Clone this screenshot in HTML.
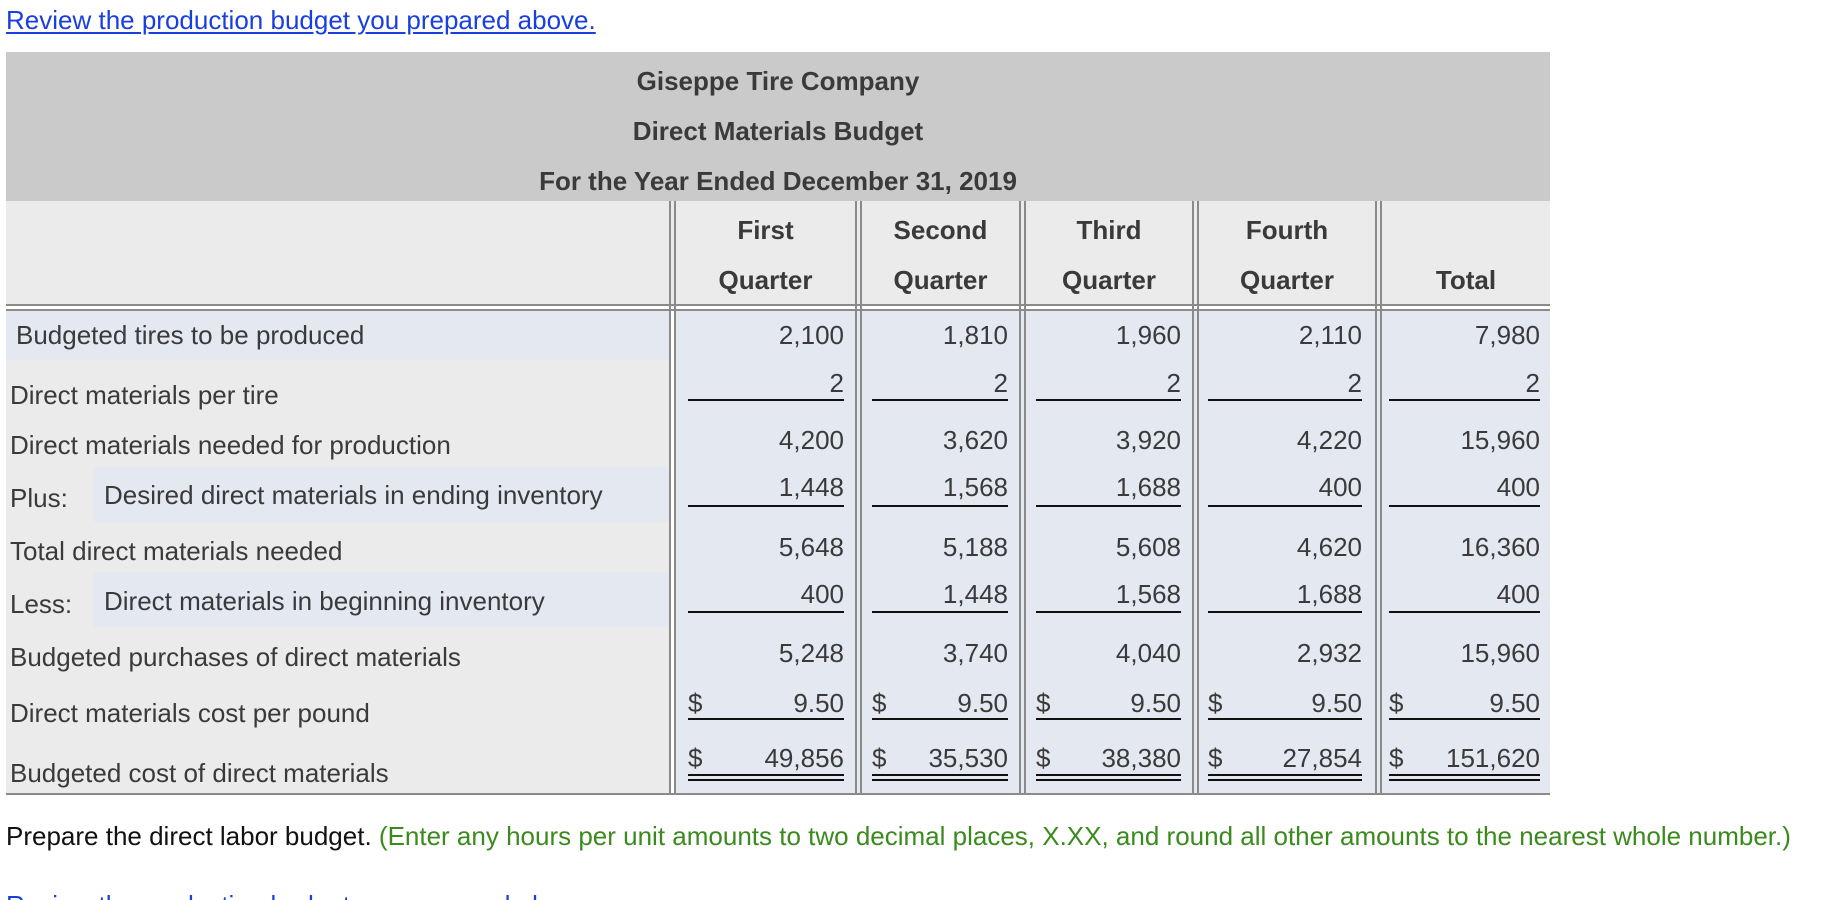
<!DOCTYPE html>
<html><head><meta charset="utf-8">
<style>
html,body{margin:0;padding:0;background:#fff;width:1848px;height:900px;overflow:hidden;position:relative;font-family:"Liberation Sans",Arial,sans-serif;color:#3a3a3a;}
.a{position:absolute;}
.t{position:absolute;font-size:26px;line-height:30px;white-space:nowrap;}
.b{font-weight:bold;}
.r{text-align:right;}
.lnk{color:#1a3fe0;text-decoration:underline;text-underline-offset:3px;}
.vl{position:absolute;top:201px;height:594px;width:2px;background:#8a8a8a;}
.hl{position:absolute;left:6px;width:1544px;height:2px;background:#8a8a8a;}
.ul{position:absolute;height:2px;background:#111;}
.c1{left:688px;width:156px}
.c2{left:872px;width:136px}
.c3{left:1036px;width:145px}
.c4{left:1208px;width:154px}
.c5{left:1389px;width:151px}
.d{position:absolute;font-size:26px;line-height:30px;}
</style></head><body>

<div class="t lnk" style="left:6px;top:5px;">Review the production budget you prepared above.</div>

<div class="a" style="left:6px;top:52px;width:1544px;height:149px;background:#cacaca;"></div>
<div class="t b" style="left:6px;width:1544px;text-align:center;top:66px;">Giseppe Tire Company</div>
<div class="t b" style="left:6px;width:1544px;text-align:center;top:116px;">Direct Materials Budget</div>
<div class="t b" style="left:6px;width:1544px;text-align:center;top:166px;">For the Year Ended December 31, 2019</div>

<div class="a" style="left:6px;top:201px;width:1544px;height:103px;background:#ebebeb;"></div>
<div class="a" style="left:6px;top:311px;width:663px;height:484px;background:#ebebeb;"></div>
<div class="a" style="left:675px;top:311px;width:875px;height:484px;background:#e4e8f1;"></div>
<div class="a" style="left:6px;top:311px;width:663px;height:49px;background:#e3e8f1;"></div>
<div class="a" style="left:94px;top:467px;width:575px;height:55px;background:#e3e8f1;"></div>
<div class="a" style="left:94px;top:572px;width:575px;height:55px;background:#e3e8f1;"></div>

<div class="hl" style="top:304px;"></div>
<div class="hl" style="top:309px;"></div>
<div class="hl" style="top:793px;"></div>

<div class="vl" style="left:669px"></div><div class="vl" style="left:674px"></div>
<div class="vl" style="left:855px"></div><div class="vl" style="left:860px"></div>
<div class="vl" style="left:1019px"></div><div class="vl" style="left:1024px"></div>
<div class="vl" style="left:1192px"></div><div class="vl" style="left:1197px"></div>
<div class="vl" style="left:1375px"></div><div class="vl" style="left:1380px"></div>

<div class="t b" style="left:676px;width:179px;text-align:center;top:215px;">First</div>
<div class="t b" style="left:676px;width:179px;text-align:center;top:265px;">Quarter</div>
<div class="t b" style="left:862px;width:157px;text-align:center;top:215px;">Second</div>
<div class="t b" style="left:862px;width:157px;text-align:center;top:265px;">Quarter</div>
<div class="t b" style="left:1026px;width:166px;text-align:center;top:215px;">Third</div>
<div class="t b" style="left:1026px;width:166px;text-align:center;top:265px;">Quarter</div>
<div class="t b" style="left:1199px;width:176px;text-align:center;top:215px;">Fourth</div>
<div class="t b" style="left:1199px;width:176px;text-align:center;top:265px;">Quarter</div>
<div class="t b" style="left:1382px;width:168px;text-align:center;top:265px;">Total</div>

<div class="t" style="left:16px;top:320px;">Budgeted tires to be produced</div>
<div class="t" style="left:10px;top:380px;">Direct materials per tire</div>
<div class="t" style="left:10px;top:430px;">Direct materials needed for production</div>
<div class="t" style="left:10px;top:483px;">Plus:</div>
<div class="t" style="left:104px;top:480px;">Desired direct materials in ending inventory</div>
<div class="t" style="left:10px;top:536px;">Total direct materials needed</div>
<div class="t" style="left:10px;top:589px;">Less:</div>
<div class="t" style="left:104px;top:586px;">Direct materials in beginning inventory</div>
<div class="t" style="left:10px;top:642px;">Budgeted purchases of direct materials</div>
<div class="t" style="left:10px;top:698px;">Direct materials cost per pound</div>
<div class="t" style="left:10px;top:758px;">Budgeted cost of direct materials</div>

<div class="d r c1" style="top:320px">2,100</div><div class="d r c2" style="top:320px">1,810</div><div class="d r c3" style="top:320px">1,960</div><div class="d r c4" style="top:320px">2,110</div><div class="d r c5" style="top:320px">7,980</div>
<div class="d r c1" style="top:368px">2</div><div class="d r c2" style="top:368px">2</div><div class="d r c3" style="top:368px">2</div><div class="d r c4" style="top:368px">2</div><div class="d r c5" style="top:368px">2</div>
<div class="ul c1" style="top:399px"></div><div class="ul c2" style="top:399px"></div><div class="ul c3" style="top:399px"></div><div class="ul c4" style="top:399px"></div><div class="ul c5" style="top:399px"></div>
<div class="d r c1" style="top:425px">4,200</div><div class="d r c2" style="top:425px">3,620</div><div class="d r c3" style="top:425px">3,920</div><div class="d r c4" style="top:425px">4,220</div><div class="d r c5" style="top:425px">15,960</div>
<div class="d r c1" style="top:472px">1,448</div><div class="d r c2" style="top:472px">1,568</div><div class="d r c3" style="top:472px">1,688</div><div class="d r c4" style="top:472px">400</div><div class="d r c5" style="top:472px">400</div>
<div class="ul c1" style="top:505px"></div><div class="ul c2" style="top:505px"></div><div class="ul c3" style="top:505px"></div><div class="ul c4" style="top:505px"></div><div class="ul c5" style="top:505px"></div>
<div class="d r c1" style="top:532px">5,648</div><div class="d r c2" style="top:532px">5,188</div><div class="d r c3" style="top:532px">5,608</div><div class="d r c4" style="top:532px">4,620</div><div class="d r c5" style="top:532px">16,360</div>
<div class="d r c1" style="top:579px">400</div><div class="d r c2" style="top:579px">1,448</div><div class="d r c3" style="top:579px">1,568</div><div class="d r c4" style="top:579px">1,688</div><div class="d r c5" style="top:579px">400</div>
<div class="ul c1" style="top:611px"></div><div class="ul c2" style="top:611px"></div><div class="ul c3" style="top:611px"></div><div class="ul c4" style="top:611px"></div><div class="ul c5" style="top:611px"></div>
<div class="d r c1" style="top:638px">5,248</div><div class="d r c2" style="top:638px">3,740</div><div class="d r c3" style="top:638px">4,040</div><div class="d r c4" style="top:638px">2,932</div><div class="d r c5" style="top:638px">15,960</div>
<div class="d c1" style="top:688px">$</div><div class="d c2" style="top:688px">$</div><div class="d c3" style="top:688px">$</div><div class="d c4" style="top:688px">$</div><div class="d c5" style="top:688px">$</div>
<div class="d r c1" style="top:688px">9.50</div><div class="d r c2" style="top:688px">9.50</div><div class="d r c3" style="top:688px">9.50</div><div class="d r c4" style="top:688px">9.50</div><div class="d r c5" style="top:688px">9.50</div>
<div class="ul c1" style="top:718px"></div><div class="ul c2" style="top:718px"></div><div class="ul c3" style="top:718px"></div><div class="ul c4" style="top:718px"></div><div class="ul c5" style="top:718px"></div>
<div class="d c1" style="top:743px">$</div><div class="d c2" style="top:743px">$</div><div class="d c3" style="top:743px">$</div><div class="d c4" style="top:743px">$</div><div class="d c5" style="top:743px">$</div>
<div class="d r c1" style="top:743px">49,856</div><div class="d r c2" style="top:743px">35,530</div><div class="d r c3" style="top:743px">38,380</div><div class="d r c4" style="top:743px">27,854</div><div class="d r c5" style="top:743px">151,620</div>
<div class="ul c1" style="top:774px"></div><div class="ul c2" style="top:774px"></div><div class="ul c3" style="top:774px"></div><div class="ul c4" style="top:774px"></div><div class="ul c5" style="top:774px"></div>
<div class="ul c1" style="top:779px"></div><div class="ul c2" style="top:779px"></div><div class="ul c3" style="top:779px"></div><div class="ul c4" style="top:779px"></div><div class="ul c5" style="top:779px"></div>

<div class="t" style="left:6px;top:821px;color:#111;">Prepare the direct labor budget. <span style="color:#3b8a1e;">(Enter any hours per unit amounts to two decimal places, X.XX, and round all other amounts to the nearest whole number.)</span></div>

<div class="t lnk" style="left:6px;top:890px;">Review the production budget you prepared above.</div>
</body></html>
